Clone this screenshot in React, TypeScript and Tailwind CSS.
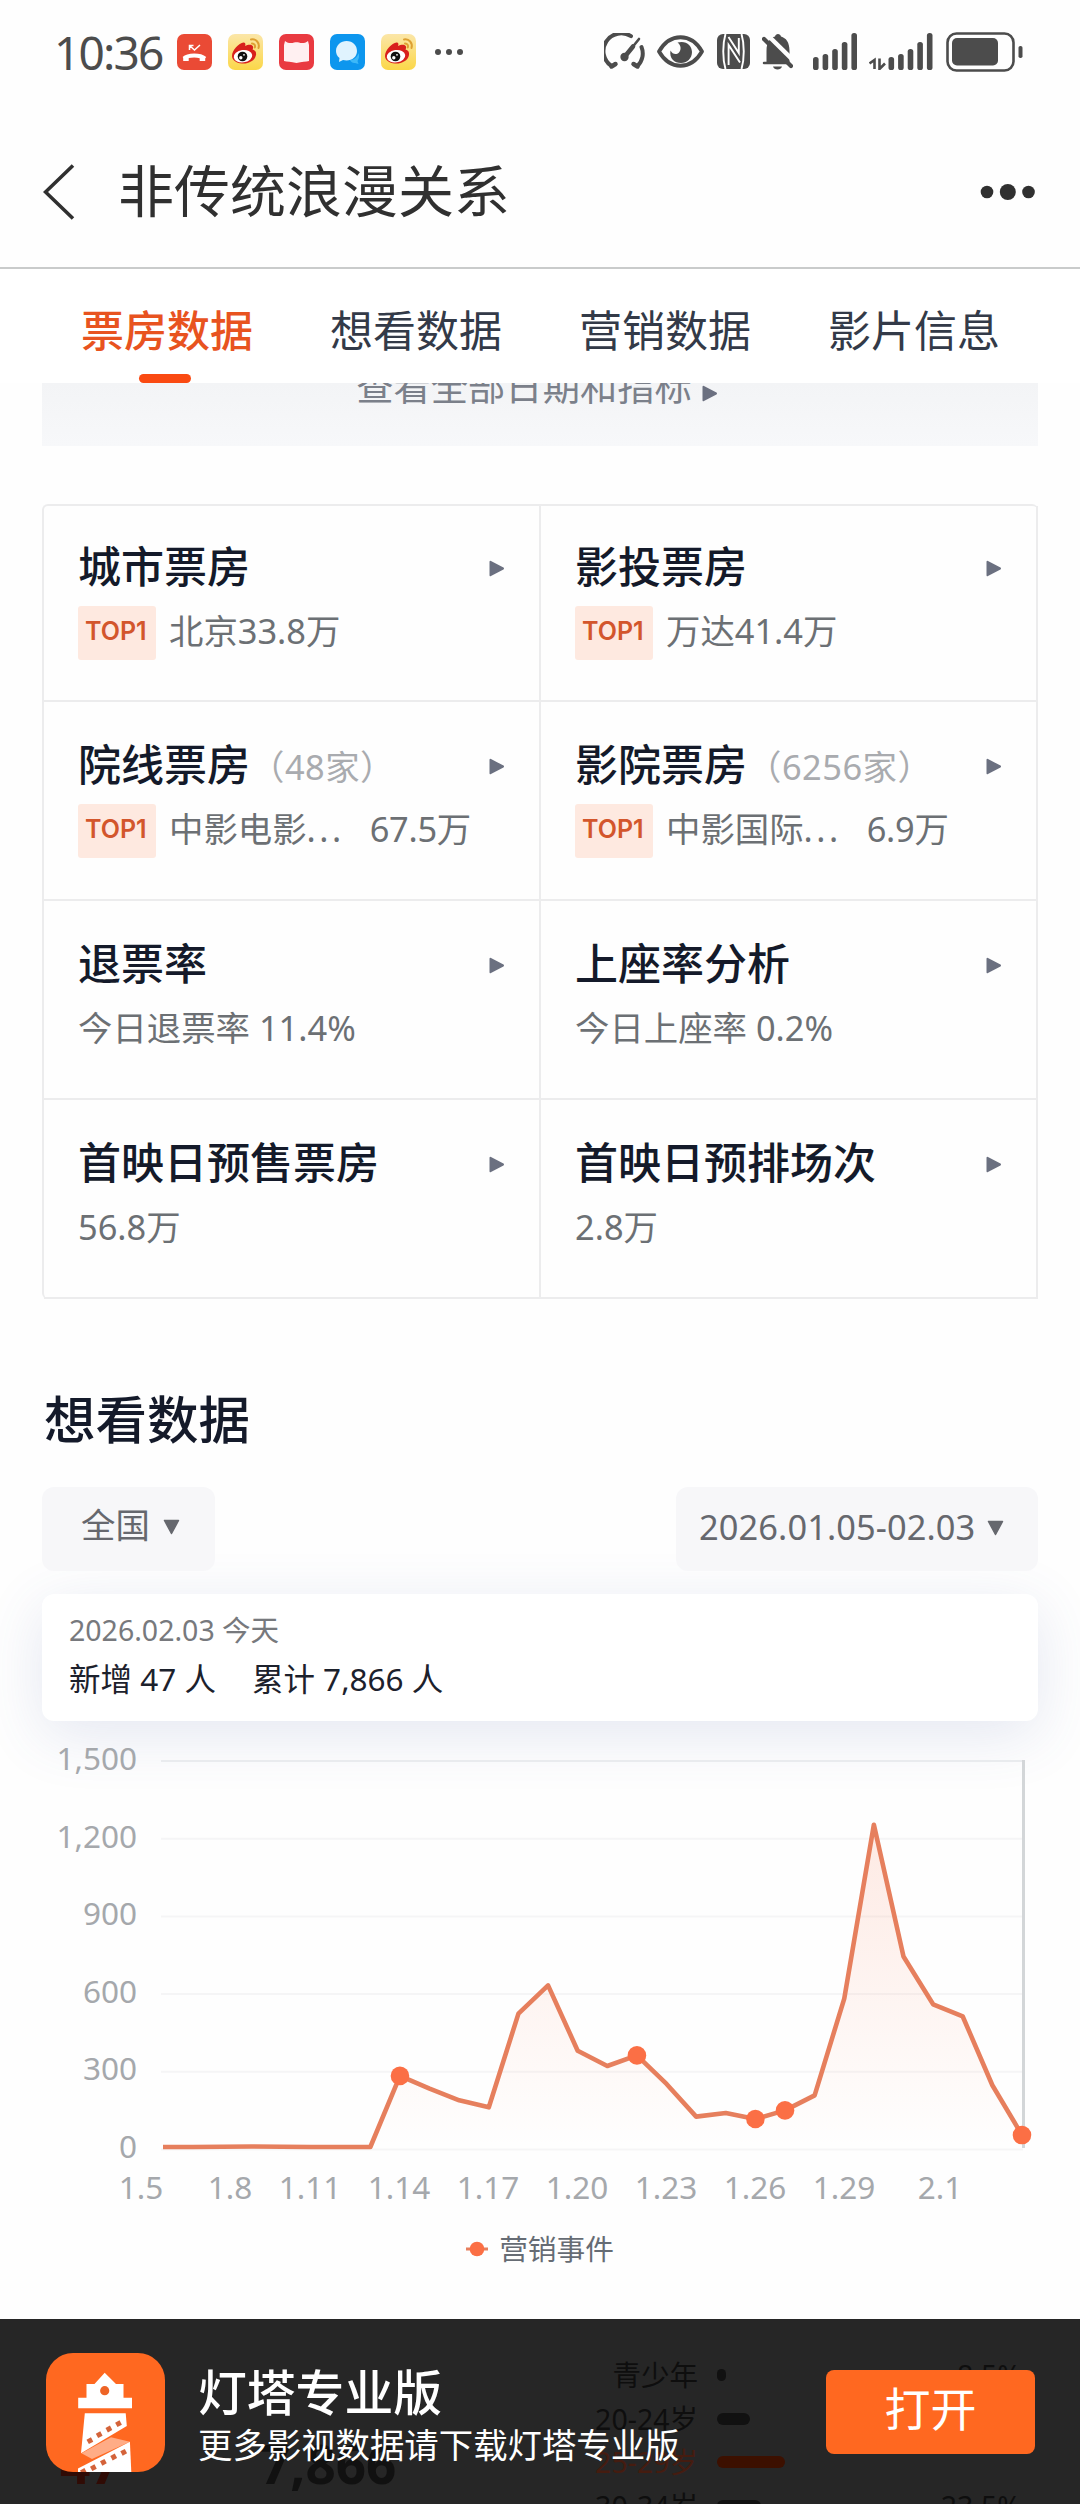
import React from "react";

type Cell = {
  title: string;
  count?: string;
  top?: boolean; // shows the TOP1 badge
  text: string;
  value?: string;
};

const tabs = ["票房数据", "想看数据", "营销数据", "影片信息"];

const cells: Cell[] = [
  { title: "城市票房", top: true, text: "北京33.8万" },
  { title: "影投票房", top: true, text: "万达41.4万" },
  { title: "院线票房", count: "（48家）", top: true, text: "中影电影", value: "67.5万" },
  { title: "影院票房", count: "（6256家）", top: true, text: "中影国际", value: "6.9万" },
  { title: "退票率", text: "今日退票率 11.4%" },
  { title: "上座率分析", text: "今日上座率 0.2%" },
  { title: "首映日预售票房", text: "56.8万" },
  { title: "首映日预排场次", text: "2.8万" },
];

// New "want to see" users for each day, 1.5 - 2.3
const daily = [
  0, 0, 1, 2, 1, 0, 0, 0, 274, 225, 180, 153, 514, 623, 371, 312, 353, 243, 117,
  131, 108, 141, 199, 572, 1242, 734, 550, 503, 238, 46,
];
const events = [8, 16, 20, 21, 29];

const yTicks = ["1,500", "1,200", "900", "600", "300", "0"];
const xTicks = ["1.5", "1.8", "1.11", "1.14", "1.17", "1.20", "1.23", "1.26", "1.29", "2.1"];
const xTickPos = [141, 230, 310, 399, 488, 577, 666, 755, 844, 940];

const px = (i: number) => 163 + i * 29.62;
const py = (v: number) => 407 - v * 0.2595;

const TriangleRight = ({ className = "" }: { className?: string }) => (
  <svg width="16" height="17" viewBox="0 0 16 17" className={className}>
    <path
      d="M1.5 1.8 L14 8.5 L1.5 15.2 Z"
      fill="#6b7080"
      stroke="#6b7080"
      strokeWidth="2"
      strokeLinejoin="round"
    />
  </svg>
);

const TriangleDown = () => (
  <svg width="17" height="16" viewBox="0 0 17 16" className="mt-[2px]">
    <path
      d="M1.5 1.5 L15.5 1.5 L8.5 14.5 Z"
      fill="#66686e"
      stroke="#66686e"
      strokeWidth="1.5"
      strokeLinejoin="round"
    />
  </svg>
);

const WeiboIcon = ({ id }: { id: string }) => (
  <svg width="35" height="36" viewBox="0 0 35 36">
    <defs>
      <linearGradient id={id} x1="0" y1="0" x2="0" y2="1">
        <stop offset="0" stopColor="#fbe6a8" />
        <stop offset="1" stopColor="#fbd748" />
      </linearGradient>
    </defs>
    <rect width="35" height="36" rx="7" fill={`url(#${id})`} />
    <path
      d="M4 22 C4 16 11 9 15.500 8.500 C18 8.500 17.500 11 17 12 C20 10.500 24 10 25 12.500 C25.500 14 24.500 15.500 24.500 15.500 C27 16 28.500 18 28 21 C27 27 20 30 14 29.500 C8 29 4 26 4 22 Z"
      fill="#d8201c"
    />
    <ellipse cx="15" cy="22.200" rx="9.300" ry="6.200" fill="#fff" transform="rotate(-8 15 22.200)" />
    <circle cx="14.500" cy="22.500" r="4.800" fill="#111" />
    <circle cx="12.800" cy="23.700" r="1.700" fill="#fff" />
    <circle cx="16" cy="20.800" r="0.900" fill="#fff" />
    <path
      d="M23 5.500 C28 4.500 32 9 30.500 14 M24 9.500 C26.500 9.500 27.500 11.500 26.800 13.500"
      fill="none"
      stroke="#dda032"
      strokeWidth="2"
      strokeLinecap="round"
    />
  </svg>
);

const Bars = () => (
  <>
    {[58, 55, 50, 43, 34].map((top, i) => (
      <rect
        key={top}
        x={i * 9.6}
        y={top - 34}
        width="5.600"
        height={71 - top}
        rx="2.600"
        fill="#4c4c4c"
      />
    ))}
  </>
);

const StatusBar = () => (
  <div className="flex h-[103px] items-center pl-[54px] pr-[57px] text-[#4c4c4c]">
    <span className="w-[123px] text-[46px] leading-none tracking-[-1.8px]">10:36</span>
    <div className="flex items-center gap-4">
      <svg width="35" height="36" viewBox="0 0 35 36">
        <rect width="35" height="36" rx="7" fill="#ea4a35" />
        <path
          d="M7 24.500 C11 20.500 23 20.500 28 24.500"
          fill="none"
          stroke="#fff"
          strokeWidth="4"
        />
        <path d="M6.200 23 h5.500 v4 h-5.500z M22.700 23 h5.500 v4 h-5.500z" fill="#fff" />
        <path d="M12.500 16 v-4.500 h4 M13 12 L17.500 16 L23 11" fill="none" stroke="#fff" strokeWidth="1.500" />
      </svg>
      <WeiboIcon id="wb1" />
      <svg width="35" height="36" viewBox="0 0 35 36">
        <rect width="35" height="36" rx="7" fill="#e93a41" />
        <path
          d="M6 7 C9 9.500 13 9.500 15 8.500 C17 8 18 8 20 8.500 C22 9.500 26 9.500 29 7 L30 11 V27 C27 28 23 27.500 17.500 29 C12 27.500 8 28 5 27 V11 Z"
          fill="#fff0f1"
        />
      </svg>
      <svg width="35" height="36" viewBox="0 0 35 36">
        <rect width="35" height="36" rx="7" fill="#0d96ee" />
        <path d="M20 26 C26 26 28 21 28.500 19 C30 23 28 26 27.500 27 L28.500 30 L25 29 C23 29.500 21 28 20 26 Z" fill="#3db8f8" />
        <path
          d="M16.500 7 C23 7 27 11.500 27 17 C27 22.500 22.500 26.500 16.500 26.500 L13 26 L9 28 L9.500 24 C7 22 6 19.500 6 17 C6 11 11 7 16.500 7 Z"
          fill="#e0f3fe"
        />
      </svg>
      <WeiboIcon id="wb2" />
    </div>
    <svg width="30" height="8" viewBox="0 0 30 8" className="ml-[18px]">
      <circle cx="4" cy="4" r="3" fill="#4c4c4c" />
      <circle cx="15" cy="4" r="3" fill="#4c4c4c" />
      <circle cx="26" cy="4" r="3" fill="#4c4c4c" />
    </svg>

    <div className="ml-auto flex items-center gap-3">
      {/* gauge */}
      <svg width="41" height="37" viewBox="0 0 41 37" fill="none" stroke="#4c4c4c" strokeLinecap="round">
        <path d="M7.500 33 A17.500 17.500 0 0 1 27 3.200" strokeWidth="4" />
        <path d="M37.500 14 A17.500 17.500 0 0 1 33.500 33" strokeWidth="4" />
        <path d="M7.500 33.500 L11.500 31 M33.500 33.500 L29.500 31" strokeWidth="4.500" />
        <path d="M35 6 L20.500 24" strokeWidth="2.600" />
        <path d="M29 13.500 L20.500 24" strokeWidth="4.500" />
        <circle cx="20.500" cy="24" r="3.400" fill="#4c4c4c" strokeWidth="1.500" />
      </svg>
      {/* eye protection */}
      <svg width="47" height="33" viewBox="0 0 47 33">
        <path
          d="M2 16.500 C13 -2.500 34 -2.500 45 16.500 C34 35.500 13 35.500 2 16.500 Z"
          fill="none"
          stroke="#4c4c4c"
          strokeWidth="3.800"
          strokeLinejoin="round"
        />
        <path
          d="M20.500 7.500 C29 5 35 10.500 35 17 C35 23.500 30 28 24 28 C17.500 28 12 23.500 13.500 15.500 C15.500 19.500 19.500 20 22 17.500 C24.500 14.500 24 10 20.500 7.500 Z"
          fill="#4c4c4c"
        />
      </svg>
      {/* nfc */}
      <svg width="33" height="35" viewBox="0 0 33 35" className="ml-[1px]">
        <rect width="33" height="35" rx="6" fill="#4c4c4c" />
        <path
          d="M8.500 0 C5.500 10 5.500 25 8.500 35 M11.600 31 V11 L23 28.500 M11.500 3 L21.800 19 V4 M24.500 0 C27.500 10 27.500 25 24.500 35"
          fill="none"
          stroke="#fff"
          strokeWidth="1.900"
        />
      </svg>
      {/* muted bell */}
      <svg width="31" height="37" viewBox="0 0 31 37">
        <path
          d="M4.500 30 V18 C4.500 8 9 4.500 13 3.500 C13.500 0 18.500 0 19 3.500 C24 5 27.500 9 27.500 18 V30 Z"
          fill="#4c4c4c"
        />
        <path d="M2 30 H26" stroke="#4c4c4c" strokeWidth="2.500" strokeLinecap="round" />
        <path d="M11 33.500 h9 c-1 4 -8 4 -9 0z" fill="#4c4c4c" />
        <path d="M-2 -2 H13 L8 4 L-2 4 Z" fill="#fefefe" />
        <path d="M5.500 2 L33 29" stroke="#fefefe" strokeWidth="4.500" />
        <path d="M2 6 L29 33" stroke="#4c4c4c" strokeWidth="4.200" strokeLinecap="round" />
      </svg>
      <svg width="44" height="37" viewBox="0 0 44 37" className="ml-2">
        <Bars />
      </svg>
      <svg width="65" height="37" viewBox="0 0 65 37">
        <path d="M5.500 36 V27 L0.500 30.500 M10.500 25.500 V36 L16 30.500" fill="none" stroke="#4c4c4c" strokeWidth="2.600" />
        <g transform="translate(19.500 0)">
          <Bars />
        </g>
      </svg>
      <svg width="77" height="40" viewBox="0 0 77 40">
        <rect x="1.500" y="1.500" width="66" height="37" rx="9" fill="none" stroke="#4c4c4c" strokeWidth="2.600" />
        <rect x="6" y="6" width="46" height="27.500" rx="5" fill="#4c4c4c" />
        <rect x="72.500" y="14" width="4" height="12" rx="1.800" fill="#4c4c4c" />
      </svg>
    </div>
  </div>
);

const Header = () => (
  <header className="flex h-[166px] items-center border-b-2 border-[#c9cbcb] pl-[43px] pr-[44px] pb-[2px] text-[#303030]">
    <svg width="32" height="56" viewBox="0 0 32 56" className="mt-4">
      <path d="M30 1.500 L2.500 28 L30 54.500" fill="none" stroke="#303030" strokeWidth="3.600" />
    </svg>
    <h1 className="ml-[43px] mt-[12px] text-[56px] leading-none">非传统浪漫关系</h1>
    <svg width="56" height="18" viewBox="0 0 56 18" className="ml-auto mt-4">
      <circle cx="7" cy="9" r="6.300" fill="#303030" />
      <circle cx="27.800" cy="9" r="8" fill="#303030" />
      <circle cx="48.500" cy="9" r="6.300" fill="#303030" />
    </svg>
  </header>
);

const Tabs = () => (
  <nav className="flex h-[114px] items-start gap-[77px] bg-white pl-[81px]">
    {tabs.map((tab, i) => (
      <div
        key={tab}
        className={`flex h-full w-[172px] flex-col items-center justify-between pt-[40px] ${
          i === 0 ? "font-medium text-[#e8531f]" : "text-[#333a48]"
        }`}
      >
        <span className="whitespace-nowrap text-[43px] leading-none">{tab}</span>
        {i === 0 && <span className="-ml-[5px] h-[9px] w-[52px] rounded-full bg-[#fa4a12]" />}
      </div>
    ))}
  </nav>
);

const GridCell = ({ cell, first }: { cell: Cell; first: boolean }) => (
  <div
    className={`border-b-2 border-r-2 border-[#ececed] pl-[34px] ${first ? "pt-[36px]" : "pt-[38px]"}`}
  >
    <div className="flex h-[48px] items-center text-[#141a2a]">
      <span className="text-[43px] font-medium leading-none">{cell.title}</span>
      {cell.count && (
        <span className="mt-[6px] text-[34.400px] leading-none tracking-[0.5px] text-[#a9abaf]">
          {cell.count}
        </span>
      )}
      <TriangleRight className="ml-auto mr-[34px] mt-[5px]" />
    </div>
    <div className="mt-[16px] flex text-[34.400px] leading-none text-[#6c7074]">
      {cell.top && (
        <span className="mr-[13px] h-[54px] w-[78px] rounded-[3px] bg-[#fee9e0] pl-[7px] pt-[11px] font-['Inter',sans-serif] text-[25px] font-semibold leading-[28px] text-[#d3562c]">
          TOP1
        </span>
      )}
      <span className="pt-[8px]">
        {cell.text}
        {cell.value && <span className="tracking-[3.500px]">...</span>}
      </span>
      {cell.value && <span className="ml-[25px] pt-[8px] tracking-[-0.300px]">{cell.value}</span>}
    </div>
  </div>
);

const Chart = () => {
  const line = daily.map((v, i) => `${px(i)},${py(v)}`).join(" ");

  return (
    <svg width="1080" height="480" viewBox="0 0 1080 480" className="-mt-[21px] block">
      <defs>
        <linearGradient id="area" x1="0" y1="80" x2="0" y2="407" gradientUnits="userSpaceOnUse">
          <stop offset="0" stopColor="#fb6a3c" stopOpacity="0.140" />
          <stop offset="1" stopColor="#fb6a3c" stopOpacity="0" />
        </linearGradient>
      </defs>
      {yTicks.map((tick, i) => (
        <g key={tick}>
          <path d={`M161 ${21 + i * 77.7} H1023`} stroke={i === 0 ? "#e9ebee" : "#f5f5f6"} strokeWidth="2" />
          <text x="137" y={30 + i * 77.500} textAnchor="end" fontSize="31.500" fill="#a5a8ac">
            {tick}
          </text>
        </g>
      ))}
      <path d="M1023.500 20 V408" stroke="#d3d6d8" strokeWidth="3" />
      <polygon points={`163,407 ${line} 1022,407`} fill="url(#area)" />
      <polyline points={line} fill="none" stroke="#e67f5d" strokeWidth="4.600" strokeLinejoin="round" />
      {events.map((i) => (
        <circle key={i} cx={px(i)} cy={py(daily[i])} r="9.300" fill="#fb6f45" />
      ))}
      {xTicks.map((tick, i) => (
        <text key={tick} x={xTickPos[i]} y="459" textAnchor="middle" fontSize="31.500" fill="#a5a8ac">
          {tick}
        </text>
      ))}
    </svg>
  );
};

const ageRows = [
  { label: "青少年", width: 9, percent: "8.5%" },
  { label: "20-24岁", width: 33, percent: "" },
  { label: "25-29岁", width: 68, percent: "", active: true },
  { label: "30-34岁", width: 44, percent: "23.5%" },
];

const DownloadBar = () => (
  <footer className="relative flex h-[185px] items-center overflow-hidden bg-[#262626] pl-[46px] pr-[45px]">
    {/* page content showing through the translucent bar */}
    <div className="absolute inset-0">
      <span className="absolute left-[60px] top-[118px] text-[53px] font-bold leading-none text-[#300b05]">47</span>
      <span className="absolute left-[260px] top-[118px] text-[53px] font-bold leading-none text-[#111]">7,866</span>
      <div className="absolute left-[580px] top-[35px]">
        {ageRows.map((row) => (
          <div
            key={row.label}
            className={`flex h-[43.500px] w-[441px] items-center text-[28.500px] leading-none ${
              row.active ? "text-[#451c10]" : "text-[#0e0e0e]"
            }`}
          >
            <span className="w-[118px] text-right">{row.label}</span>
            <span
              className={`ml-[19px] h-[12px] rounded-full ${row.active ? "bg-[#3c1000]" : "bg-[#111]"}`}
              style={{ width: row.width }}
            />
            <span className="ml-auto">{row.percent}</span>
          </div>
        ))}
      </div>
    </div>

    <svg width="119" height="119" viewBox="0 0 119 119" className="relative mt-[2px]">
      <rect width="119" height="119" rx="27" fill="#ff6820" />
      <path
        d="M58.700 19.700 L70 31 H77.500 V44.700 H86 V55.300 H32.200 V44.700 H40.500 V31 H48.500 Z"
        fill="#fff"
      />
      <circle cx="58.700" cy="37.700" r="4.600" fill="#ee6426" />
      <path d="M38.800 60.300 H79.700 L80.800 73 L35 100.300 Z" fill="#fff" />
      <path d="M65 84.300 L83.900 88.700 L46 106 L35.500 100.300 Z" fill="#ffac86" />
      <path d="M83.900 88.700 L85.300 119 H32 V115.500 Z" fill="#fff" />
      {[
        [43.9, 87.7],
        [53.2, 81.7],
        [62.9, 76],
        [72.5, 70.7],
        [37.4, 118.5],
        [47.4, 114.7],
        [57.4, 109.3],
        [67.7, 104],
        [77.7, 99.3],
      ].map(([x, y]) => (
        <rect
          key={x}
          x={x - 2.5}
          y={y - 2.5}
          width="5"
          height="5"
          fill="#d4633a"
          transform={`rotate(-28 ${x} ${y})`}
        />
      ))}
    </svg>
    <div className="relative ml-[33px] mt-[8px] text-white">
      <p className="text-[48.800px] font-medium leading-none">灯塔专业版</p>
      <p className="mt-[11px] text-[34.400px] leading-none">更多影视数据请下载灯塔专业版</p>
    </div>
    <button className="relative ml-auto mt-[2px] h-[84px] w-[209px] rounded-lg bg-[#ff6820] pb-2 text-[46px] leading-none text-white">
      打开
    </button>
  </footer>
);

const App = () => {
  return (
    <div className="h-[2504px] w-[1080px] overflow-hidden bg-[#fefefe] font-['Noto_Sans','Noto_Sans_CJK_SC',sans-serif]">
      <StatusBar />
      <Header />
      <Tabs />

      <div className="mx-[42px] flex h-[63px] justify-center overflow-hidden bg-linear-to-b from-[#f3f4f6] to-[#f7f8fa]">
        <div className="-mt-[15px] mr-[6px] flex h-[37px] items-center gap-[10px] text-[37.300px] leading-none text-[#7b808a]">
          查看全部日期和指标
          <TriangleRight className="mt-[14px]" />
        </div>
      </div>

      <section className="mx-[42px] mt-[58px] grid grid-cols-2 grid-rows-[196px_199px_199px_199px] rounded-md border-l-2 border-t-2 border-[#ececed]">
        {cells.map((cell, i) => (
          <GridCell key={cell.title} cell={cell} first={i < 2} />
        ))}
      </section>

      <h2 className="ml-[44px] mt-[95px] text-[51.500px] font-medium leading-none text-[#141a2a]">想看数据</h2>

      <div className="mx-[42px] mt-[41px] flex h-[84px] justify-between text-[34.400px] leading-none text-[#66686e]">
        <div className="flex w-[173px] items-center gap-[13px] rounded-xl bg-[#f7f7f9] pb-[6px] pl-[39px]">
          全国
          <TriangleDown />
        </div>
        <div className="flex w-[362px] items-center gap-[12px] rounded-xl bg-[#f7f7f9] pb-[3px] pl-[23px] tracking-[0.1px]">
          2026.01.05-02.03
          <TriangleDown />
        </div>
      </div>

      <div className="mx-[42px] mt-[23px] h-[127px] rounded-xl bg-white pl-[27px] pt-[22px] shadow-[0_14px_60px_rgba(70,90,160,0.14)]">
        <p className="text-[28.500px] leading-none text-[#77797d]">2026.02.03 今天</p>
        <p className="mt-[19px] flex gap-[36px] text-[31.500px] leading-none text-[#1c212c]">
          <span>新增 47 人</span>
          <span>累计 7,866 人</span>
        </p>
      </div>

      <div className="h-[598px] pt-[40px]">
        <Chart />
        <div className="mt-[15px] flex items-center justify-center gap-[11px] text-[28.700px] leading-none text-[#666c74]">
          <svg width="22" height="16" viewBox="0 0 22 16">
            <path d="M0 8 H22" stroke="#e67f5d" strokeWidth="3" />
            <circle cx="11" cy="8" r="7.300" fill="#fb6f45" />
          </svg>
          营销事件
        </div>
      </div>

      <DownloadBar />
    </div>
  );
};

export default App;
